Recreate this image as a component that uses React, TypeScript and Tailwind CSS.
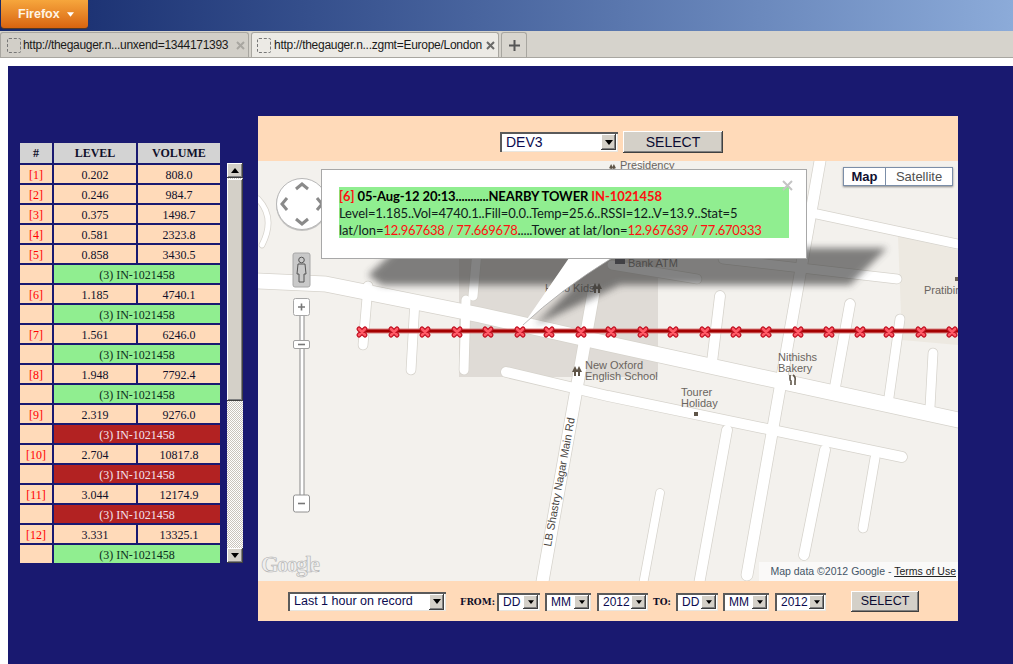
import React from "react";

const rows: (string[] | "g" | "r")[] = [
  ["[1]", "0.202", "808.0"],
  ["[2]", "0.246", "984.7"],
  ["[3]", "0.375", "1498.7"],
  ["[4]", "0.581", "2323.8"],
  ["[5]", "0.858", "3430.5"],
  "g",
  ["[6]", "1.185", "4740.1"],
  "g",
  ["[7]", "1.561", "6246.0"],
  "g",
  ["[8]", "1.948", "7792.4"],
  "g",
  ["[9]", "2.319", "9276.0"],
  "r",
  ["[10]", "2.704", "10817.8"],
  "r",
  ["[11]", "3.044", "12174.9"],
  "r",
  ["[12]", "3.331", "13325.1"],
  "g",
];

const RAISED = "shadow-[inset_-1px_-1px_0_#404040,inset_1px_1px_0_#ffffff,inset_-2px_-2px_0_#808080]";

const Tri = ({ up = false, w = 8 }: { up?: boolean; w?: number }) => (
  <svg width={w} height={w / 2 + 1} viewBox="0 0 8 5">
    <path d={up ? "M0 5 L4 0 L8 5 Z" : "M0 0 L8 0 L4 5 Z"} fill="#000" />
  </svg>
);

function Sel({ text, className, tall = false }: { text: string; className: string; tall?: boolean }) {
  return (
    <div
      className={`flex items-center bg-white pl-[6px] pr-[2px] text-[#0b0b50] shadow-[inset_2px_2px_0_#5a5a5a,inset_-1px_-1px_0_#e8e6e0] ${className}`}
    >
      <span className="flex-1 truncate">{text}</span>
      <div className={`flex w-[15px] items-center justify-center bg-[#d4d0c8] ${tall ? "h-[16px]" : "h-[14px]"} ${RAISED}`}>
        <Tri w={tall ? 8 : 6} />
      </div>
    </div>
  );
}

function Btn({ className }: { className: string }) {
  return <div className={`flex items-center justify-center bg-[#d4d0c8] text-[#0b0b30] ${RAISED} ${className}`}>SELECT</div>;
}

const roads: { p: string; w: number }[] = [
  { p: "M258 281 L325 284 L480 315 L600 342 L958 420", w: 15 },
  { p: "M506 372 L608 396 L902 457", w: 10 },
  { p: "M817 214 L958 244", w: 9 },
  { p: "M612 265 L697 279", w: 9 },
  { p: "M723 259 L897 279", w: 9 },
  { p: "M820 161 L747 575", w: 11 },
  { p: "M727 430 L698 590", w: 10 },
  { p: "M660 493 L642 590", w: 8 },
  { p: "M825 450 L804 555", w: 10 },
  { p: "M875 458 L863 528", w: 9 },
  { p: "M720 296 L712 362", w: 10 },
  { p: "M850 304 L835 387", w: 10 },
  { p: "M900 319 L889 397", w: 9 },
  { p: "M933 353 L930 407", w: 9 },
  { p: "M594 290 L541 590", w: 12 },
  { p: "M368 286 L363 345", w: 9 },
  { p: "M415 300 L411 370", w: 9 },
  { p: "M466 300 L464 370", w: 9 },
  { p: "M478 240 L473 296", w: 9 },
  { p: "M258 199 Q276 218 262 245", w: 5 },
  { p: "M640 161 L610 230", w: 6 },
];

const markers = [362, 394, 425, 457, 488, 520, 549, 581, 611, 643, 673, 705, 736, 766, 798, 829, 860, 889, 921, 952];

const People = ({ x, y }: { x: number; y: number }) => (
  <g transform={`translate(${x} ${y})`} fill="#5f5548">
    <path d="M3 0 L6 6 L4 6 L4 10 L2 10 L2 6 L0 6 Z" />
    <path d="M7 0 L10 6 L8 6 L8 10 L6 10 L6 6 L4 6 Z" />
  </g>
);

const lbl = { fontFamily: "'Liberation Sans',sans-serif", fontSize: 11, fill: "#6a6560" };

function MapArt() {
  return (
    <svg viewBox="258 161 700 420" width={700} height={420} className="block">
      <defs>
        <filter id="b" x="-10%" y="-40%" width="120%" height="180%">
          <feGaussianBlur stdDeviation="3.5" />
        </filter>
      </defs>
      <rect x="258" y="161" width="700" height="420" fill="#f3f1ed" />
      <rect x="459" y="235" width="199" height="142" fill="#dfdbd6" />
      <path d="M898 236 L958 250 L958 345 L902 340 Z" fill="#ede9e1" />
      {roads.map((r, i) => (
        <path key={i} d={r.p} fill="none" stroke="#d6d3cc" strokeWidth={r.w + 1.5} strokeLinecap="round" />
      ))}
      {roads.map((r, i) => (
        <path key={i} d={r.p} fill="none" stroke="#ffffff" strokeWidth={r.w} strokeLinecap="round" />
      ))}

      <text x="620" y="169" {...lbl}>Presidency</text>
      <g transform="translate(609 164) scale(0.7)" fill="#5f5548">
        <path d="M3 0 L6 6 L4 6 L4 10 L2 10 L2 6 L0 6 Z" />
        <path d="M7 0 L10 6 L8 6 L8 10 L6 10 L6 6 L4 6 Z" />
      </g>
      <text x="628" y="267" {...lbl}>Bank ATM</text>
      <rect x="615" y="258" width="10" height="6" fill="#4a4a55" />
      <text x="545" y="292" {...lbl}>Hello Kids</text>
      <People x={592} y={283} />
      <text x="924" y="294" {...lbl}>Pratibim</text>
      <rect x="955" y="277" width="3" height="4" fill="#6a6055" />
      <People x={572} y={366} />
      <text x="585" y="369" {...lbl}>New Oxford</text>
      <text x="585" y="380" {...lbl}>English School</text>
      <text x="778" y="361" {...lbl}>Nithishs</text>
      <text x="778" y="372" {...lbl}>Bakery</text>
      <path d="M790 375 L790 379 Q790 381 791 381 L791 385 M793 375 Q796 377 795 381 L795 385" stroke="#5f5548" strokeWidth="1.6" fill="none" />
      <text x="681" y="396" {...lbl}>Tourer</text>
      <text x="681" y="407" {...lbl}>Holiday</text>
      <rect x="694" y="412" width="4" height="4" fill="#5f5548" />
      <text
        x="551"
        y="547"
        transform="rotate(-79.5 551 547)"
        textLength={131}
        fontFamily="'Liberation Sans',sans-serif"
        fontSize={11}
        fill="#4a4642"
      >
        LB Shastry Nagar Main Rd
      </text>

      <g filter="url(#b)" opacity="0.64">
        <path d="M398 248 L887 248 L850 285 L620 285 L535 325 L575 285 L382 285 L368 275 Z" fill="#3c3c3c" />
      </g>

      <path d="M362 331 L958 331" stroke="#d88080" strokeWidth="5" />
      <path d="M362 331 L958 331" stroke="#a40000" strokeWidth="3" />
      {markers.map((x) => (
        <g key={x} transform={`translate(${x} 332)`}>
          <path d="M-3 -3 L3 3 M3 -3 L-3 3" stroke="#c00f20" strokeWidth="5" strokeLinecap="round" />
          <path d="M-3 -3 L3 3 M3 -3 L-3 3" stroke="#ff5a66" strokeWidth="2.6" strokeLinecap="round" />
        </g>
      ))}

      <path d="M569 258 L523 325 Q560 290 612 258 Z" fill="#ffffff" />
      <path d="M523 325 Q560 290 612 258" fill="none" stroke="#a8a8a8" strokeWidth="0.8" />

      {/* nav */}
      <circle cx="302" cy="205" r="26" fill="#8a8a8a" opacity="0.45" />
      <circle cx="302" cy="204" r="25.5" fill="#ffffff" stroke="#b8b8b8" />
      <g fill="none" stroke="#8a8a8a" strokeWidth="3">
        <path d="M296 189 L302 184 L308 189" />
        <path d="M296 219 L302 224 L308 219" />
        <path d="M287 198 L282 204 L287 210" />
        <path d="M317 198 L322 204 L317 210" />
      </g>
      {/* pegman */}
      <rect x="293" y="253" width="17" height="34" rx="2" fill="#c9c9c9" stroke="#a8a8a8" />
      <circle cx="301.5" cy="260" r="2.8" fill="none" stroke="#555" />
      <path d="M298 264 L305 264 L306 274 L304 274 L304 282 L299 282 L299 274 L297 274 Z" fill="none" stroke="#555" />
      {/* zoom */}
      <rect x="300" y="315" width="4" height="182" fill="#ffffff" stroke="#8a8a8a" />
      <rect x="293.5" y="298.5" width="16" height="17" rx="2" fill="#ffffff" stroke="#a8a8a8" />
      <path d="M298 307 L305 307 M301.5 303.5 L301.5 310.5" stroke="#777" strokeWidth="1.6" />
      <rect x="293.5" y="340.5" width="16" height="8" rx="1.5" fill="#ffffff" stroke="#a0a0a0" />
      <path d="M298 344.5 L305 344.5" stroke="#777" strokeWidth="1.6" />
      <rect x="293.5" y="495" width="16" height="17" rx="2" fill="#ffffff" stroke="#909090" />
      <path d="M298 503.5 L305 503.5" stroke="#777" strokeWidth="1.6" />

      <text x="261" y="572" fontFamily="'Liberation Serif',serif" fontSize="23" fontWeight="700" fill="#eeeeee" stroke="#b0b0b0" strokeWidth="0.6" textLength={59}>
        Google
      </text>
    </svg>
  );
}

export default function App() {
  return (
    <div className="flex h-[664px] w-full flex-col overflow-hidden bg-white [font-family:'Liberation_Sans',Arial,sans-serif]">
      <div className="h-[31px] shrink-0 bg-linear-to-r from-[#15286b] to-[#8cabd9]">
        <div className="ml-px flex h-[28px] w-[87px] items-center rounded-b-[3px] bg-linear-to-b from-[#f6a63c] to-[#d8640e] pl-[17px] shadow-[0_1px_1px_#5a3a20]">
          <span className="text-[12.5px] font-bold text-[#fff4e4]">Firefox</span>
          <svg width="7" height="5" viewBox="0 0 8 5" className="ml-[7px]">
            <path d="M0 0 L8 0 L4 5 Z" fill="#fff" />
          </svg>
        </div>
      </div>

      <div className="flex h-[27px] shrink-0 items-end border-b border-[#a8a6a0] bg-[#d6d3cc] pt-[2px]">
        <div className="flex h-[25px] w-[249px] items-center rounded-t-[3px] border border-b-0 border-[#a8a6a0] bg-[#d2cfc8] pl-[6px] text-[12px] text-[#1a1a1a]">
          <div className="h-[15px] w-[14px] rounded-[2px] border border-dashed border-[#777]" />
          <span className="ml-[2px] w-[207px] whitespace-nowrap tracking-[-0.3px]">http://thegauger.n...unxend=1344171393</span>
          <svg width="9" height="9" viewBox="0 0 9 9" className="ml-[6px]">
            <path d="M1 1 L8 8 M8 1 L1 8" stroke="#a8a6a0" strokeWidth="2" />
          </svg>
        </div>
        <div className="ml-[2px] flex h-[25px] w-[248px] items-center rounded-t-[3px] border border-b-0 border-[#a8a6a0] bg-[#eceae5] pl-[5px] text-[12px] text-[#1a1a1a]">
          <div className="h-[15px] w-[14px] rounded-[2px] border border-dashed border-[#777]" />
          <span className="ml-[3px] w-[206px] whitespace-nowrap tracking-[-0.27px]">http://thegauger.n...zgmt=Europe/London</span>
          <svg width="9" height="9" viewBox="0 0 9 9" className="ml-[6px]">
            <path d="M1 1 L8 8 M8 1 L1 8" stroke="#6a6a68" strokeWidth="2" />
          </svg>
        </div>
        <div className="ml-[2px] flex h-[25px] w-[26px] items-center justify-center rounded-t-[3px] border border-b-0 border-[#a8a6a0] bg-[#d8d5ce]">
          <svg width="11" height="11" viewBox="0 0 11 11">
            <path d="M5.5 0 L5.5 11 M0 5.5 L11 5.5" stroke="#555" strokeWidth="2" />
          </svg>
        </div>
      </div>

      <div className="h-[8px] shrink-0 bg-white" />

      <div className="ml-2 flex flex-1 items-start bg-[#191970]">
        <div className="ml-3 mt-[77px] w-[200px] text-[12px] [font-family:'Liberation_Serif','Times_New_Roman',serif]">
          <div className="mb-[4px] grid h-[18px] grid-cols-[32px_82px_82px] gap-[2px] text-center font-bold leading-[20px] text-[#10102a]">
            <div className="bg-[#d3d3d3]">#</div>
            <div className="bg-[#d3d3d3]">LEVEL</div>
            <div className="bg-[#d3d3d3]">VOLUME</div>
          </div>
          <div className="grid grid-cols-[32px_82px_82px] gap-[2px] text-center leading-[20px] text-[#10102a]">
            {rows.map((r, i) =>
              typeof r === "string" ? (
                <React.Fragment key={i}>
                  <div className="h-[18px] bg-[#ffdab9]" />
                  <div className={r === "g" ? "col-span-2 h-[18px] bg-[#90ee90] text-[#0c2c1c]" : "col-span-2 h-[18px] bg-[#b22222] text-[#f2e4f0]"}>
                    (3) IN-1021458
                  </div>
                </React.Fragment>
              ) : (
                <React.Fragment key={i}>
                  <div className="h-[18px] bg-[#ffdab9] text-[#ff0000]">{r[0]}</div>
                  <div className="h-[18px] bg-[#ffdab9]">{r[1]}</div>
                  <div className="h-[18px] bg-[#ffdab9]">{r[2]}</div>
                </React.Fragment>
              )
            )}
          </div>
        </div>

        <div className="ml-[7px] mt-[97px] flex h-[400px] w-[16px] flex-col bg-[repeating-conic-gradient(#ffffff_0_25%,#c8c4bc_0_50%)] bg-size-[2px_2px]">
          <div className={`flex h-[15px] shrink-0 items-center justify-center bg-[#d4d0c8] ${RAISED}`}>
            <Tri up />
          </div>
          <div className={`mt-px h-[222px] shrink-0 bg-[#d4d0c8] ${RAISED}`} />
          <div className="flex-1" />
          <div className={`flex h-[15px] shrink-0 items-center justify-center bg-[#d4d0c8] ${RAISED}`}>
            <Tri />
          </div>
        </div>

        <div className="ml-[15px] mt-[50px] flex w-[700px] flex-col bg-[#ffdab9]">
          <div className="flex h-[45px] items-center pl-[242px] pt-[7px]">
            <Sel text="DEV3" tall className="h-[20px] w-[118px] text-[14px]" />
            <Btn className="ml-[5px] h-[22px] w-[100px] text-[14px]" />
          </div>

          <div className="relative h-[420px] overflow-hidden">
            <MapArt />

            <div className="absolute left-[63px] top-[8px] h-[90px] w-[486px] border border-[#a8a8a8] bg-white pl-[17px] pt-[17px] [font-family:Lato,'Noto_Sans',sans-serif]">
              <div className="h-[51px] w-[450px] whitespace-nowrap bg-[#90ee90] pt-px text-[13px] leading-[17px] tracking-[-0.1px] text-[#10201c]">
                <div className="font-bold text-black">
                  <span className="text-[#ff1010]">[6]</span> 05-Aug-12 20:13...........NEARBY TOWER <span className="text-[#ff1010]">IN-1021458</span>
                </div>
                <div>Level=1.185..Vol=4740.1..Fill=0.0..Temp=25.6..RSSI=12..V=13.9..Stat=5</div>
                <div>
                  lat/lon=<span className="tracking-[-0.25px] text-[#ff1010]">12.967638 / 77.669678</span>.....Tower at lat/lon=<span className="tracking-[-0.25px] text-[#ff1010]">12.967639 / 77.670333</span>
                </div>
              </div>
              <svg width="11" height="11" viewBox="0 0 11 11" className="absolute right-[13px] top-[10px]">
                <path d="M1 1 L10 10 M10 1 L1 10" stroke="#c4c4c4" strokeWidth="2" />
              </svg>
            </div>

            <div className="absolute left-[585px] top-[6px] flex h-[19px] w-[110px] border border-[#7b8ea8] bg-white text-[13px] leading-[17px] shadow-[0_1px_2px_#888]">
              <div className="w-[42px] border-r border-[#7b8ea8] text-center font-bold text-[#101030]">Map</div>
              <div className="flex-1 text-center text-[#505050]">Satellite</div>
            </div>

            <div className="absolute bottom-0 right-0 h-[19px] w-[199px] bg-white/60 pt-[3px] text-right text-[10.5px] leading-[13px] text-[#445566]">
              Map data ©2012 Google - <span className="text-[#222] underline">Terms of Use</span>
              <span className="inline-block w-[2px]" />
            </div>
          </div>

          <div className="flex h-[40px] items-center pl-[30px] pt-px text-[12.5px]">
            <Sel text="Last 1 hour on record" tall className="h-[19px] w-[158px]" />
            <span className="ml-[14px] w-[32px] pt-[3px] text-[9px] font-bold text-[#10102a] [font-family:'DejaVu_Serif',serif]">FROM:</span>
            <Sel text="DD" className="ml-[5px] h-[18px] w-[43px] text-[12px]" />
            <Sel text="MM" className="ml-[5px] h-[18px] w-[46px] text-[12px]" />
            <Sel text="2012" className="ml-[6px] h-[18px] w-[51px] text-[12px]" />
            <span className="ml-[5px] w-[18px] pt-[3px] text-[9px] font-bold text-[#10102a] [font-family:'DejaVu_Serif',serif]">TO:</span>
            <Sel text="DD" className="ml-[5px] h-[18px] w-[42px] text-[12px]" />
            <Sel text="MM" className="ml-[5px] h-[18px] w-[46px] text-[12px]" />
            <Sel text="2012" className="ml-[6px] h-[18px] w-[51px] text-[12px]" />
            <Btn className="ml-[25px] h-[21px] w-[68px] text-[12.5px]" />
          </div>
        </div>
      </div>
    </div>
  );
}
